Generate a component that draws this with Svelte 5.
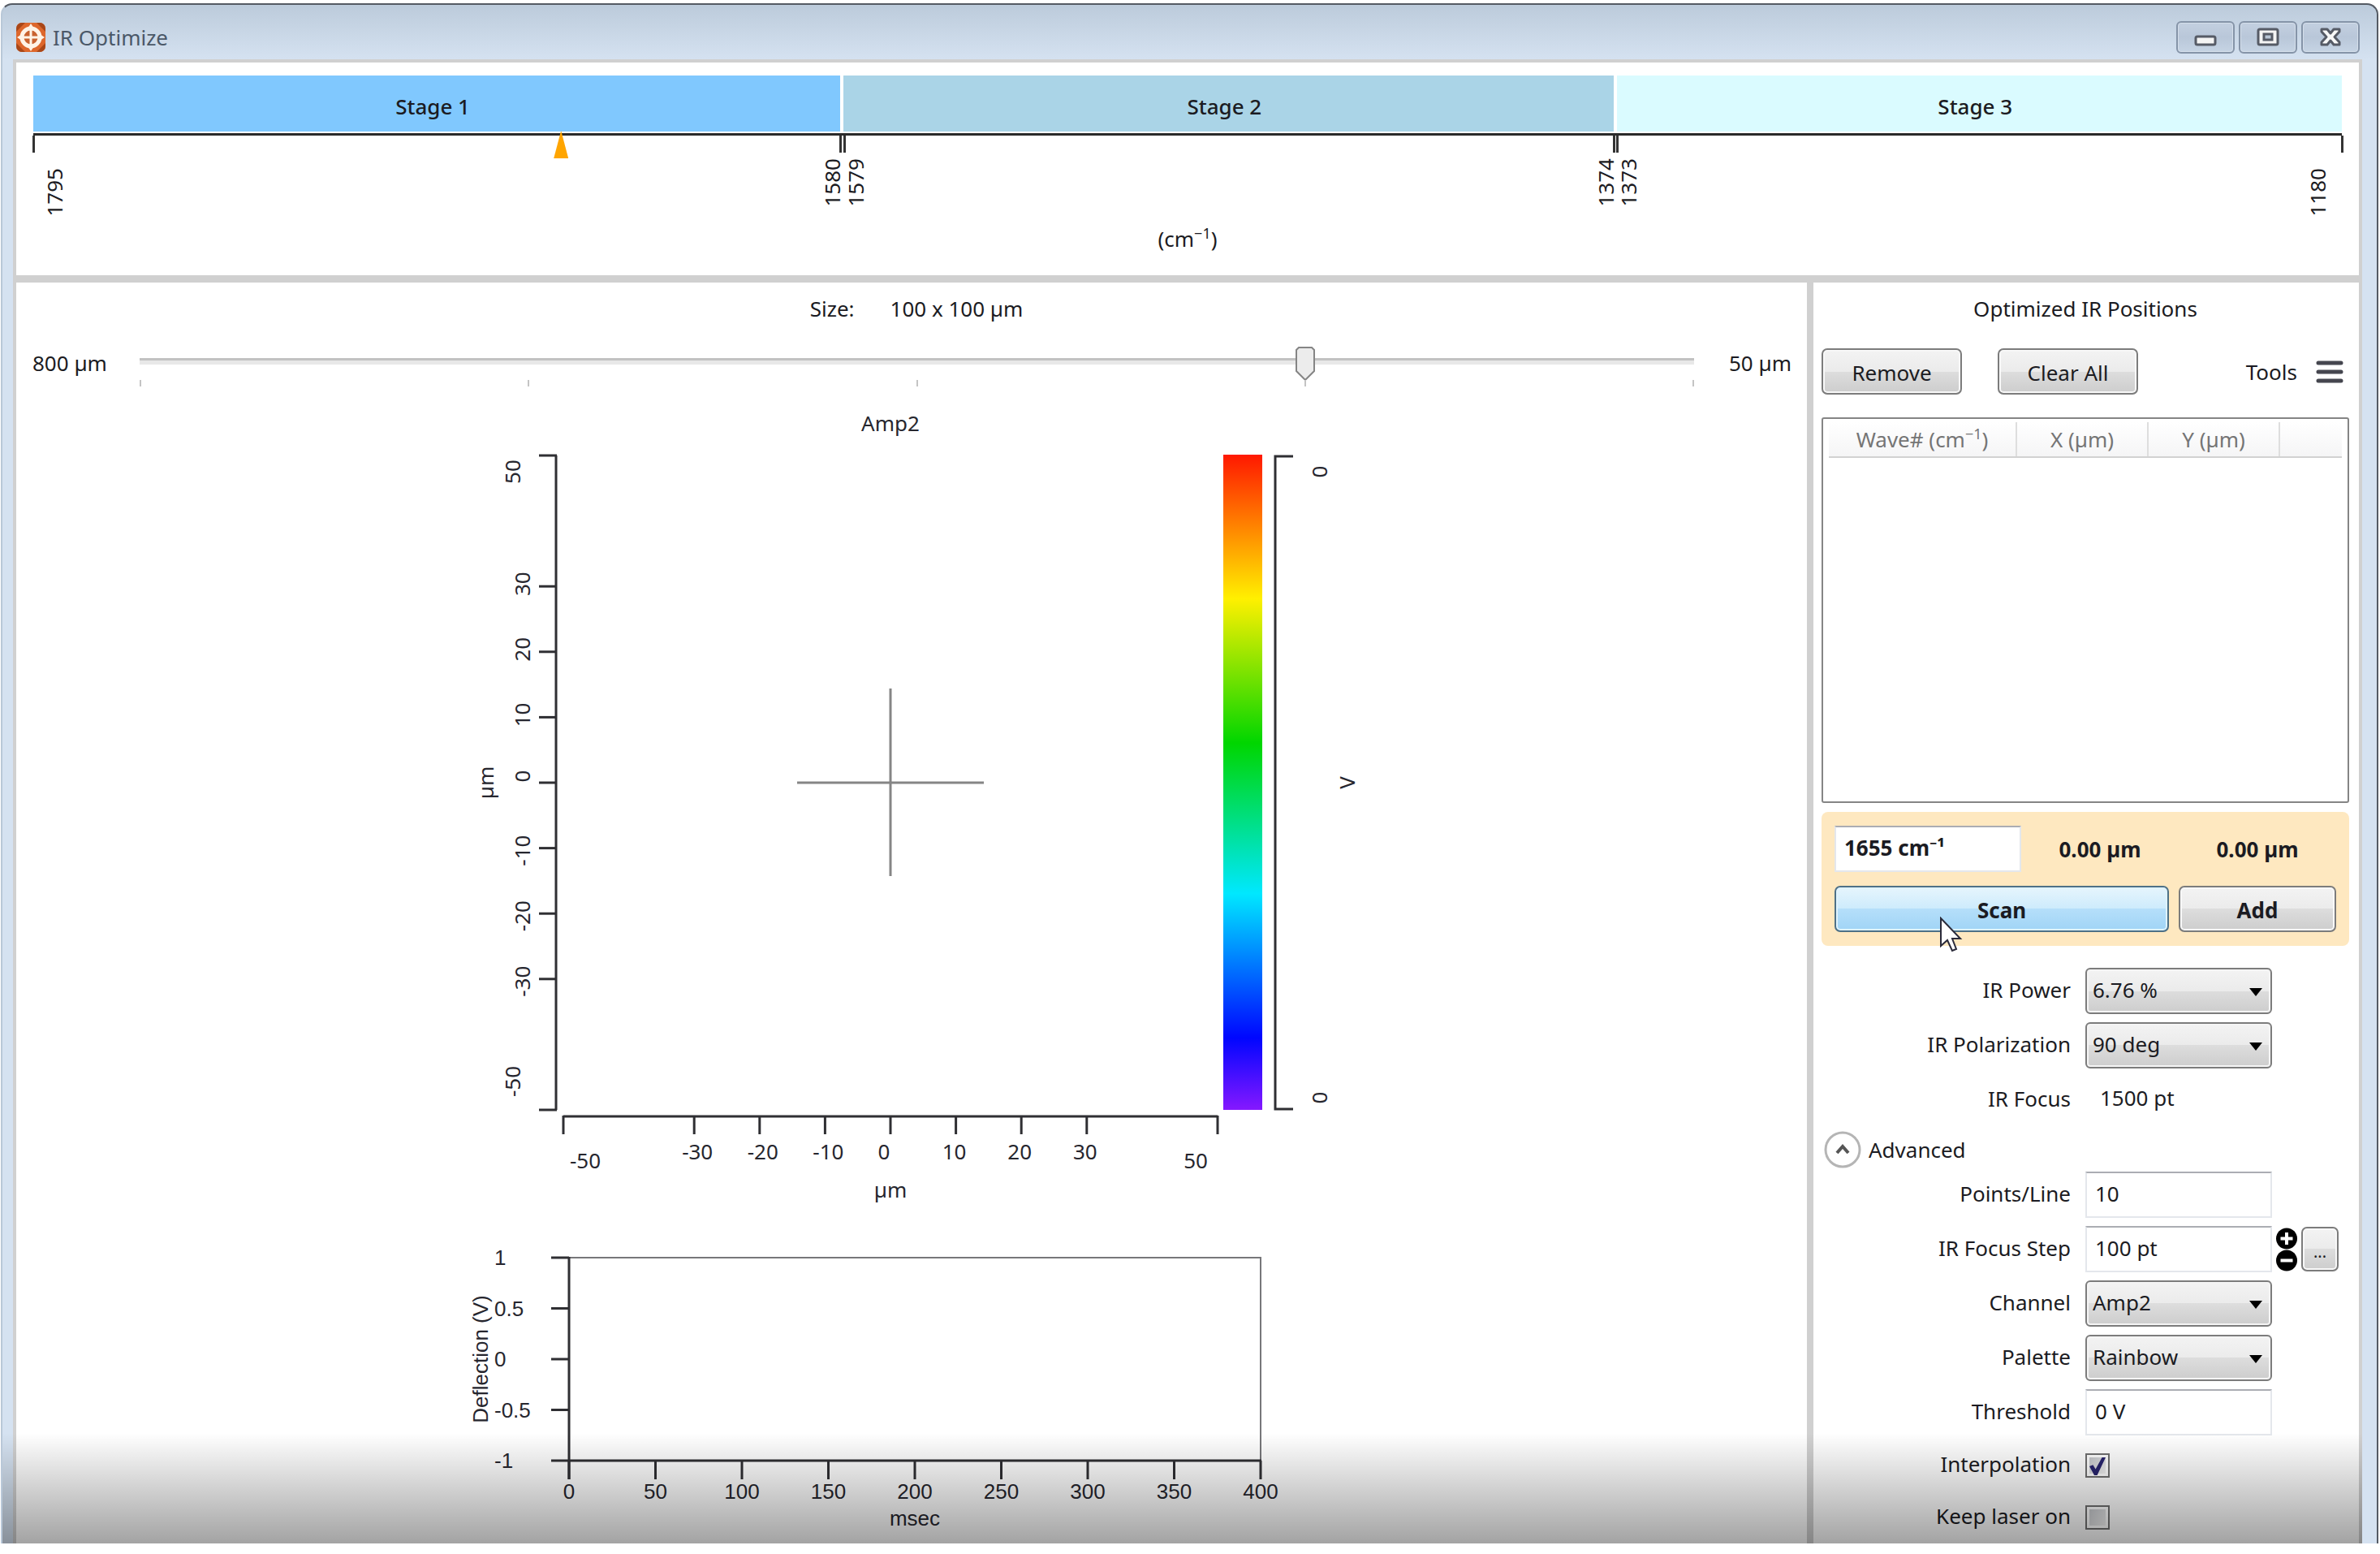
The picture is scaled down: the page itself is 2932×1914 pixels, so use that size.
<script lang="ts">
	const maxWave = 1795;
	const minWave = 1180;
	const laserWave = 1654.4;

	const stages = [
		{ name: "Stage 1", from: 1795, to: 1580, color: "#80c8fe" },
		{ name: "Stage 2", from: 1579, to: 1374, color: "#aad4e7" },
		{ name: "Stage 3", from: 1373, to: 1180, color: "#dafbff" },
	];

	// shift keeps neighbouring labels from sitting on each other
	const waveTicks = [
		{ value: 1795, shift: 26, edge: true },
		{ value: 1580, shift: -10, edge: false },
		{ value: 1579, shift: 14, edge: false },
		{ value: 1374, shift: -10, edge: false },
		{ value: 1373, shift: 14, edge: false },
		{ value: 1180, shift: -30, edge: true },
	];

	const wavePercent = (wave: number) => ((maxWave - wave) / (maxWave - minWave)) * 100;


	const mapTicks = [-50, -30, -20, -10, 0, 10, 20, 30, 50];
	const mapX = (v: number) => 524 + v * 8.06;
	const mapY = (v: number) => 423 - v * 8.06;

	const xLabelX = (v: number) => {
		if (v === -50) return mapX(v) + 27;
		if (v === 50) return mapX(v) - 27;
		if (v === 0) return mapX(v) - 8;
		return mapX(v) + (v < 0 ? 4 : -2);
	};

	const yLabelY = (v: number) => {
		if (v === -50) return mapY(v) - 35;
		if (v === 50) return mapY(v) + 20;
		if (v === 0) return mapY(v) - 8;
		return mapY(v) + (v < 0 ? 3 : -3);
	};


	const timeTicks = [0, 50, 100, 150, 200, 250, 300, 350, 400];
	const voltTicks = [1, 0.5, 0, -0.5, -1];
	const timeX = (v: number) => 128 + v * 2.13;
	const voltY = (v: number) => 143 - v * 125;


	let size = $state(75);
	let wave = $state("1655 cm⁻¹");
	let pointsPerLine = $state("10");
	let focusStep = $state("100 pt");
	let threshold = $state("0 V");
	let interpolation = $state(true);
	let keepLaserOn = $state(false);
	let advancedOpen = $state(true);
</script>


<div class="window">
	<header class="titlebar">
		<svg class="logo" width="38" height="38" viewBox="0 0 38 38">
			<rect x="1" y="1" width="36" height="36" rx="7" fill="#dd672c" />
			<path d="M1 12V8a7 7 0 0 1 7-7h4zM37 12V8a7 7 0 0 0-7-7h-4zM1 26v4a7 7 0 0 0 7 7h4zM37 26v4a7 7 0 0 1-7 7h-4z" fill="#a94718" />
			<path d="M19 2l4 6-4 2-4-2zM19 36l4-6-4-2-4 2zM2 19l6-4 2 4-2 4zM36 19l-6-4-2 4 2 4z" fill="#fff3e6" />
			<circle cx="19" cy="19" r="11" fill="#c9622f" stroke="#fff3e6" stroke-width="5" />
			<path d="M19 9v20M9 19h20" stroke="#fff3e6" stroke-width="3" />
		</svg>
		<h1>IR Optimize</h1>
		<div class="window-buttons">
			<button aria-label="Minimize">
				<svg width="30" height="26" viewBox="0 0 30 26"><rect x="3" y="12" width="24" height="10" rx="2" fill="#f4f4f4" stroke="#565b66" stroke-width="3" /></svg>
			</button>
			<button aria-label="Maximize">
				<svg width="30" height="26" viewBox="0 0 30 26">
					<rect x="3" y="3" width="24" height="19" rx="2" fill="#f4f4f4" stroke="#565b66" stroke-width="3" />
					<rect x="10" y="9" width="10" height="7" fill="#b9c6d6" stroke="#565b66" stroke-width="3" />
				</svg>
			</button>
			<button aria-label="Close">
				<svg width="30" height="26" viewBox="0 0 30 26"><path d="M4 3h7l4 5 4-5h7v3l-6 6.500 6 6.500v3h-7l-4-5-4 5h-7v-3l6-6.500-6-6.500z" fill="#f8f8f8" stroke="#565b66" stroke-width="3" stroke-linejoin="round" /></svg>
			</button>
		</div>
	</header>

	<div class="content">
		<section class="stages">
			<div class="stage-bar">
				{#each stages as stage}
					<div class="stage" style="flex-grow: {stage.from - stage.to}; background-color: {stage.color}">{stage.name}</div>
				{/each}
			</div>
			<div class="wave-axis">
				{#each waveTicks as tick}
					<i class="wave-tick" style="left: {wavePercent(tick.value)}%"></i>
					<span class="wave-label" class:edge={tick.edge} style="left: calc({wavePercent(tick.value)}% + {tick.shift}px)">{tick.value}</span>
				{/each}
				<i class="marker" style="left: {wavePercent(laserWave)}%"></i>
			</div>
			<p class="unit">(cm<sup>−1</sup>)</p>
		</section>

		<div class="panes">
			<main class="scan">
				<p class="size"><label for="size">Size:</label><output for="size">100 x 100 µm</output></p>

				<div class="size-row">
					<span>800 µm</span>
					<div class="slider">
						<input id="size" type="range" min="0" max="100" bind:value={size} />
						<div class="slider-ticks"><i></i><i></i><i></i><i></i><i></i></div>
					</div>
					<span>50 µm</span>
				</div>

				<svg class="map" width="1100" height="990" viewBox="0 0 1100 990">
					<defs>
						<linearGradient id="rainbow" x1="0" y1="0" x2="0" y2="1">
							<stop offset="0" stop-color="#ff1800" />
							<stop offset="0.22" stop-color="#fff000" />
							<stop offset="0.44" stop-color="#00d600" />
							<stop offset="0.67" stop-color="#00e8ff" />
							<stop offset="0.89" stop-color="#0006ff" />
							<stop offset="1" stop-color="#8518ff" />
						</linearGradient>
					</defs>

					<text x="524" y="-20">Amp2</text>

					<path class="axis" d="M112 20V826" />
					<text transform="translate(25 423) rotate(-90)">µm</text>
					{#each mapTicks as v}
						<path class="axis" d="M91 {mapY(v)}h22" />
						<text transform="translate({Math.abs(v) === 50 ? 58 : 70} {yLabelY(v)}) rotate(-90)">{v}</text>
					{/each}

					<path class="axis" d="M121 834H927" />
					{#each mapTicks as v}
						<path class="axis" d="M{mapX(v)} 833v23" />
						<text x={xLabelX(v)} y={Math.abs(v) === 50 ? 888 : 877}>{v}</text>
					{/each}
					<text x="524" y="924">µm</text>

					<path class="cross" d="M524 307v231M409 423h230" />

					<rect x="934" y="19" width="48" height="807" fill="url(#rainbow)" />
					<path class="axis" d="M1020 21H998V825H1020" />
					<text transform="translate(1052 40) rotate(-90)">0</text>
					<text transform="translate(1052 811) rotate(-90)">0</text>
					<text transform="translate(1086 423) rotate(-90)">V</text>
				</svg>

				<svg class="trace" width="1100" height="370" viewBox="0 0 1100 370">
					<path class="frame" d="M128 18H980V268" />
					<path class="axis" d="M128 17V291M127 268H981" />
					{#each voltTicks as v}
						<path class="axis" d="M106 {voltY(v)}h22" />
						<text class="volt" x="36" y={voltY(v)}>{v}</text>
					{/each}
					{#each timeTicks as v}
						<path class="axis" d="M{timeX(v)} 268v23" />
						<text x={timeX(v)} y="306">{v}</text>
					{/each}
					<text x="554" y="339">msec</text>
					<text transform="translate(19 143) rotate(-90)">Deflection (V)</text>
				</svg>
			</main>

			<aside class="side">
				<h2>Optimized IR Positions</h2>

				<div class="tools">
					<button class="btn">Remove</button>
					<button class="btn">Clear All</button>
					<button class="menu">Tools
						<svg width="34" height="30" viewBox="0 0 34 30"><path d="M3 4h28M3 15h28M3 26h28" stroke="#45464f" stroke-width="5" stroke-linecap="round" /></svg>
					</button>
				</div>

				<div class="positions">
					<table>
						<thead>
							<tr><th class="wave-col">Wave# (cm<sup>−1</sup>)</th><th class="xy-col">X (µm)</th><th class="xy-col">Y (µm)</th><th></th></tr>
						</thead>
						<tbody></tbody>
					</table>
				</div>

				<div class="current">
					<div class="current-row">
						<input class="field" aria-label="Wavenumber" bind:value={wave} />
						<output>0.00 µm</output>
						<output>0.00 µm</output>
					</div>
					<div class="current-row actions">
						<button class="btn scan-btn">Scan
							<svg class="pointer" width="32" height="46" viewBox="0 0 32 46"><path d="M2 2v34l8-7 6 13 5-2-5-13h10z" fill="#fff" stroke="#2b2b3a" stroke-width="2" /></svg>
						</button>
						<button class="btn">Add</button>
					</div>
				</div>

				<div class="form">
					<label for="power">IR Power</label>
					<div class="select"><select id="power"><option>6.76 %</option></select></div>

					<label for="polarization">IR Polarization</label>
					<div class="select"><select id="polarization"><option>90 deg</option></select></div>

					<label for="focus">IR Focus</label>
					<output id="focus" class="value">1500 pt</output>
				</div>

				<button class="expander" aria-expanded={advancedOpen} onclick={() => (advancedOpen = !advancedOpen)}>
					<svg width="46" height="46" viewBox="0 0 46 46">
						<circle cx="23" cy="23" r="21" fill="#fff" stroke="#b5b5b5" stroke-width="3" />
						<path d="M16 27l7-8 7 8" fill="none" stroke="#555" stroke-width="4" />
					</svg>
					Advanced
				</button>

				{#if advancedOpen}
					<div class="form advanced">
						<label for="points">Points/Line</label>
						<input id="points" class="field" bind:value={pointsPerLine} />

						<label for="step">IR Focus Step</label>
						<input id="step" class="field" bind:value={focusStep} />
						<div class="stepper">
							<div class="step-buttons">
								<button aria-label="Increase"><svg width="28" height="27" viewBox="0 0 28 27"><circle cx="14" cy="13.500" r="13" /><path d="M14 6v15M6.500 13.500h15" stroke="#fff" stroke-width="4" /></svg></button>
								<button aria-label="Decrease"><svg width="28" height="27" viewBox="0 0 28 27"><circle cx="14" cy="13.500" r="13" /><path d="M6.500 13.500h15" stroke="#fff" stroke-width="4" /></svg></button>
							</div>
							<button class="btn more">...</button>
						</div>

						<label for="channel">Channel</label>
						<div class="select"><select id="channel"><option>Amp2</option></select></div>

						<label for="palette">Palette</label>
						<div class="select"><select id="palette"><option>Rainbow</option></select></div>

						<label for="threshold">Threshold</label>
						<input id="threshold" class="field" bind:value={threshold} />

						<label class="check-label" for="interpolation">Interpolation</label>
						<input id="interpolation" type="checkbox" bind:checked={interpolation} />

						<label class="check-label" for="laser">Keep laser on</label>
						<input id="laser" type="checkbox" bind:checked={keepLaserOn} />
					</div>
				{/if}
			</aside>
		</div>
	</div>

	<div class="shade"></div>
</div>


<style>
	:global(body) {
		background-color: white;
	}

	* {
		box-sizing: border-box;
	}

	.window {
		--border-grey: #d0d0d0;

		position: relative;
		display: flex;
		flex-direction: column;

		margin: 4px 2px 0 1px;
		min-height: calc(100vh - 17px);
		padding: 0 18px 0 13px;

		border: 2px solid #555b64;
		border-left-color: #b9c8d8;
		border-bottom: 0;
		border-radius: 14px 14px 0 0;
		background: linear-gradient(#bccbdb, #d5e2f1 68px);

		font: 26px/36px "Noto Sans", sans-serif;
		color: #1b1b22;
	}

	button, input, select {
		font: inherit;
		color: inherit;
		margin: 0;
	}

	h1, h2, p {
		margin: 0;
		font: inherit;
	}

	sup {
		font-size: 18px;
		line-height: 0;
		vertical-align: 10px;
	}


	.titlebar {
		display: flex;
		align-items: center;
		gap: 8px;
		height: 67px;
		padding: 20px 3px 7px;
		color: #4b5868;
	}

	.window-buttons {
		display: flex;
		gap: 5px;
		margin-left: auto;
	}

	.window-buttons button {
		display: grid;
		place-items: center;
		width: 72px;
		height: 40px;
		padding: 0;
		border: 2px solid #8594a8;
		border-radius: 6px;
		background: linear-gradient(#c3d0e0, #b9c7d9 50%, #c6d4e4);
		box-shadow: inset 0 0 0 1px #d5dfeb;
	}


	.content {
		flex: 1;
		display: flex;
		flex-direction: column;
		border: 4px solid var(--border-grey);
		border-bottom: 0;
		background-color: white;
	}

	.stages {
		padding: 16px 21px 0;
		height: 271px;
		border-bottom: 9px solid var(--border-grey);
	}

	.stage-bar {
		display: flex;
		gap: 4px;
	}

	.stage {
		flex-basis: 0;
		height: 69px;
		padding: 20px 10px 0 0;
		text-align: center;
		font-weight: 500;
	}

	.wave-axis {
		position: relative;
		height: 112px;
		margin-top: 2px;
		border-top: 3px solid #2a2a2a;
	}

	.wave-tick {
		position: absolute;
		top: 0;
		width: 3px;
		height: 21px;
		margin-left: -1px;
		background-color: #333;
	}

	.wave-label {
		position: absolute;
		top: 28px;
		writing-mode: vertical-rl;
		transform: translateX(-50%) rotate(180deg);
	}

	.wave-label.edge {
		top: 40px;
	}

	.marker {
		position: absolute;
		top: -6px;
		width: 18px;
		height: 34px;
		margin-left: -9px;
		background-color: #ffa500;
		clip-path: polygon(50% 0, 100% 100%, 0 100%);
	}

	.unit {
		text-align: center;
	}


	.panes {
		flex: 1;
		display: flex;
	}

	.scan {
		flex: 1;
		display: flex;
		flex-direction: column;
		align-items: center;
		padding-top: 14px;
	}

	.size {
		display: flex;
		gap: 44px;
		padding-left: 12px;
	}

	.size-row {
		align-self: stretch;
		display: grid;
		grid-template-columns: 112px 1fr 100px;
		column-gap: 20px;
		padding: 29px 19px 0 20px;
	}

	.size-row > span {
		padding-top: 2px;
	}

	.size-row > span:last-child {
		text-align: right;
	}

	.slider-ticks {
		display: flex;
		justify-content: space-between;
		margin-top: -1px;
	}

	.slider-ticks i {
		width: 2px;
		height: 8px;
		background-color: #c4c4c4;
	}

	input[type="range"] {
		appearance: none;
		display: block;
		width: calc(100% + 22px);
		height: 42px;
		margin: 0 -11px;
		background: linear-gradient(#c2c2c2 3px, #e8e8e8 3px) 11px 14px / calc(100% - 22px) 8px no-repeat;
	}

	input[type="range"]::-webkit-slider-thumb {
		appearance: none;
		width: 24px;
		height: 42px;
		background: url("data:image/svg+xml,%3Csvg xmlns='http://www.w3.org/2000/svg' viewBox='0 0 24 42'%3E%3Cpath d='M4 1h16l3 3v26l-11 11-11-11v-26z' fill='%23ececec' stroke='%23858585' stroke-width='2'/%3E%3C/svg%3E");
	}


	.map, .trace {
		overflow: visible;
		flex: none;
	}

	.map {
		margin-top: 65px;
	}

	.trace {
		font-family: "Liberation Sans", Arial, sans-serif;
	}

	svg text {
		text-anchor: middle;
		dominant-baseline: central;
		fill: #26262e;
	}

	svg text.volt {
		text-anchor: start;
	}

	.axis {
		fill: none;
		stroke: #2f2f33;
		stroke-width: 3;
	}

	.cross {
		stroke: #858585;
		stroke-width: 3;
	}

	.frame {
		fill: none;
		stroke: #77777a;
		stroke-width: 2;
	}


	.side {
		width: 680px;
		padding: 14px 12px 0 10px;
		border-left: 8px solid var(--border-grey);
	}

	.side h2 {
		text-align: center;
	}

	.btn {
		height: 57px;
		padding: 3px 6px 0;
		border: 2px solid #7c7c7c;
		border-radius: 7px;
		background: linear-gradient(#f3f3f3, #ebebeb 50%, #dddddd 50%, #cdcdcd);
		box-shadow: inset 0 0 0 2px #f8f8f8;
	}

	.tools {
		display: flex;
		align-items: center;
		gap: 44px;
		margin-top: 31px;
	}

	.tools .btn {
		width: 173px;
	}

	.menu {
		display: flex;
		align-items: center;
		gap: 23px;
		margin-left: auto;
		padding: 0 7px 0 0;
		border: 0;
		background: none;
	}

	.positions {
		height: 475px;
		margin-top: 28px;
		padding: 4px 7px;
		border: 2px solid #858585;
		border-radius: 3px;
	}

	table {
		width: 100%;
		table-layout: fixed;
		border-collapse: collapse;
	}

	th {
		height: 43px;
		padding: 0;
		border-right: 2px solid #dedede;
		border-bottom: 2px solid #d2d2d2;
		background: linear-gradient(white, #f5f5f6);
		font-weight: normal;
		color: #757575;
	}

	th:last-child {
		border-right: 0;
	}

	.wave-col {
		width: 231px;
	}

	.xy-col {
		width: 162px;
	}


	.current {
		display: grid;
		gap: 17px;
		margin-top: 11px;
		padding: 17px 16px;
		border-radius: 8px;
		background-color: #fee8c0;
		font-weight: bold;
	}

	.current-row {
		display: grid;
		grid-template-columns: 230px 1fr 1fr;
		align-items: center;
		text-align: center;
	}

	.current-row.actions {
		grid-template-columns: 1fr 194px;
		gap: 12px;
	}

	.scan-btn {
		position: relative;
		border-color: #4e7187;
		background: linear-gradient(#e6f5fd, #cdebfc 50%, #b5dffa 50%, #a0d4f6);
		box-shadow: inset 0 0 0 2px #dff3fd;
	}

	.pointer {
		position: absolute;
		left: 127px;
		top: 36px;
		z-index: 1;
	}

	.field {
		width: 230px;
		height: 57px;
		padding: 0 10px 4px;
		border: 2px solid #e4e7ec;
		border-top-color: #abadb3;
		background-color: white;
	}


	.form {
		display: grid;
		grid-template-columns: 307px 230px 1fr;
		column-gap: 18px;
		row-gap: 10px;
		align-items: center;
		margin-top: 27px;
	}

	.form.advanced {
		margin-top: 4px;
	}

	.form label {
		grid-column: 1;
		text-align: right;
		padding-bottom: 4px;
	}

	.form .check-label {
		height: 54px;
		padding-top: 7px;
	}

	.value {
		height: 57px;
		padding: 8px 18px;
	}

	.select {
		position: relative;
	}

	.select::after {
		content: "";
		position: absolute;
		right: 12px;
		top: 25px;
		width: 16px;
		height: 10px;
		background-color: black;
		clip-path: polygon(0 0, 100% 0, 50% 100%);
		pointer-events: none;
	}

	select {
		appearance: none;
		display: block;
		width: 100%;
		height: 57px;
		padding: 0 7px 4px;
		border: 2px solid #7c7c7c;
		border-radius: 6px;
		background: linear-gradient(#f3f3f3, #ebebeb 50%, #dddddd 50%, #cdcdcd);
		box-shadow: inset 0 0 0 2px #f5f5f5;
	}

	.expander {
		display: flex;
		align-items: center;
		gap: 9px;
		margin-top: 10px;
		padding: 0 0 0 3px;
		border: 0;
		background: none;
	}

	.stepper {
		display: flex;
		align-items: center;
		gap: 4px;
		margin-left: -14px;
	}

	.step-buttons {
		display: flex;
		flex-direction: column;
	}

	.step-buttons button {
		height: 27px;
		padding: 0;
		border: 0;
		background: none;
	}

	.step-buttons svg {
		display: block;
	}

	.more {
		width: 46px;
		height: 55px;
		padding: 6px 0 0;
		font-size: 20px;
	}

	input[type="checkbox"] {
		appearance: none;
		width: 30px;
		height: 30px;
		border: 2px solid #707070;
		background: linear-gradient(135deg, #c4c6ca, #f2f2f2) content-box #f1f1f1;
		padding: 3px;
	}

	input[type="checkbox"]:checked::after {
		content: "";
		display: block;
		width: 20px;
		height: 22px;
		background-color: #28246e;
		clip-path: polygon(0 50%, 22% 42%, 38% 66%, 78% 0, 100% 0, 48% 100%, 30% 100%);
	}


	/* fades the bottom of the window out */
	.shade {
		position: absolute;
		left: 0;
		right: 18px;
		bottom: 0;
		height: 136px;
		background: linear-gradient(transparent, rgba(0, 0, 0, 0.36));
		pointer-events: none;
	}
</style>
